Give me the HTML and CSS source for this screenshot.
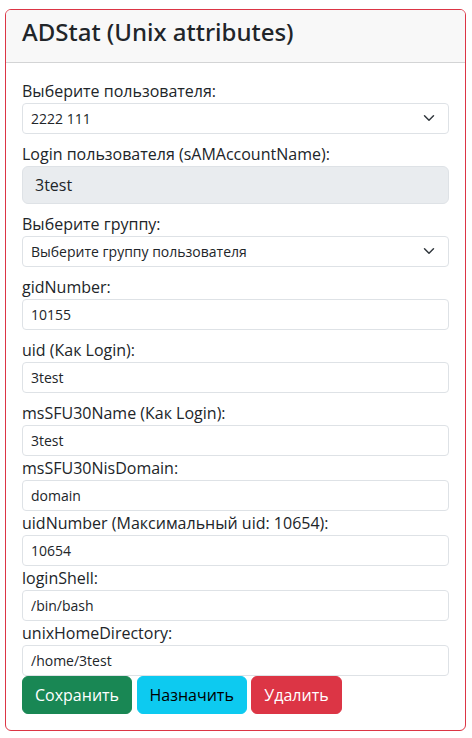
FILE: index.html
```html
<!DOCTYPE html>
<html lang="ru">
<head>
<meta charset="utf-8">
<title>ADStat (Unix attributes)</title>
<link rel="stylesheet" href="styles.css">
</head>
<body>
<div class="page">
  <div class="card">
    <div class="card-header">
      <h3 class="title">ADStat (Unix attributes)</h3>
    </div>
    <form class="card-body">
      <div class="group mb">
        <label class="label">Выберите пользователя:</label>
        <div class="select-wrap">
          <select class="select"><option>2222 111</option></select>
          <svg class="chevron" width="16" height="12" viewBox="0 0 16 16"><path d="m2 5 6 6 6-6" fill="none" stroke="#343a40" stroke-width="2" stroke-linecap="round" stroke-linejoin="round"/></svg>
        </div>
      </div>
      <div class="group mb">
        <label class="label">Login пользователя (sAMAccountName):</label>
        <input class="input input-lg" value="3test" readonly>
      </div>
      <div class="group mb">
        <label class="label">Выберите группу:</label>
        <div class="select-wrap">
          <select class="select"><option>Выберите группу пользователя</option></select>
          <svg class="chevron" width="16" height="12" viewBox="0 0 16 16"><path d="m2 5 6 6 6-6" fill="none" stroke="#343a40" stroke-width="2" stroke-linecap="round" stroke-linejoin="round"/></svg>
        </div>
      </div>
      <div class="group mb">
        <label class="label">gidNumber:</label>
        <input class="input" value="10155">
      </div>
      <div class="group mb">
        <label class="label">uid (Как Login):</label>
        <input class="input" value="3test">
      </div>
      <div class="group">
        <label class="label">msSFU30Name (Как Login):</label>
        <input class="input" value="3test">
      </div>
      <div class="group">
        <label class="label">msSFU30NisDomain:</label>
        <input class="input" value="domain">
      </div>
      <div class="group">
        <label class="label">uidNumber (Максимальный uid: 10654):</label>
        <input class="input" value="10654">
      </div>
      <div class="group">
        <label class="label">loginShell:</label>
        <input class="input" value="/bin/bash">
      </div>
      <div class="group">
        <label class="label">unixHomeDirectory:</label>
        <input class="input" value="/home/3test">
      </div>
      <div class="buttons">
        <button type="button" class="btn btn-success">Сохранить</button>
        <button type="button" class="btn btn-info">Назначить</button>
        <button type="button" class="btn btn-danger">Удалить</button>
      </div>
    </form>
  </div>
</div>
</body>
</html>
```

FILE: styles.css
```css
* { box-sizing: border-box; }
html, body { margin: 0; padding: 0; background: #fff; }
body {
  font-family: "Open Sans", "Noto Sans", sans-serif;
  font-size: 16px;
  line-height: 1.5;
  color: #212529;
}
.page { padding: 9px 6px 7px 5px; }
.card {
  border: 1px solid #dc3545;
  border-radius: 6px;
  overflow: hidden;
  background: #fff;
}
.card-header {
  padding: 8px 16px;
  background: #f8f8f8;
  border-bottom: 1px solid #d3d4d5;
}
.title {
  margin: 0 0 8px;
  font-family: "Noto Sans", "Open Sans", sans-serif;
  font-size: 24px;
  font-weight: 500;
  line-height: 28.3px;
}
.card-body { padding: 16px; display: block; margin: 0; }
.group.mb { margin-bottom: 8px; }
.label { display: block; line-height: 24px; }
.select-wrap { position: relative; }
.select, .input {
  display: block;
  width: 100%;
  margin: 0;
  font-family: inherit;
  font-size: 14px;
  line-height: 21px;
  height: 31px;
  padding: 4px 8px;
  color: #212529;
  background: #fff;
  border: 1px solid #dee2e6;
  border-radius: 4px;
  outline: none;
}
.select { appearance: none; -webkit-appearance: none; padding-right: 36px; }
.chevron { position: absolute; right: 12px; top: 9px; pointer-events: none; }
.input-lg {
  height: 38px;
  font-size: 16px;
  line-height: 24px;
  padding: 6px 12px;
  border-radius: 6px;
  background: #e9ecef;
}
.buttons { font-size: 0; display: flex; gap: 4.5px; }
.btn {
  font-family: inherit;
  font-size: 16px;
  line-height: 24px;
  padding: 6px 12px;
  border: 1px solid transparent;
  border-radius: 6px;
  cursor: pointer;
}
.btn-success { background: #198754; border-color: #198754; color: #fff; }
.btn-info { background: #0dcaf0; border-color: #0dcaf0; color: #000; }
.btn-danger { background: #dc3545; border-color: #dc3545; color: #fff; }
```
